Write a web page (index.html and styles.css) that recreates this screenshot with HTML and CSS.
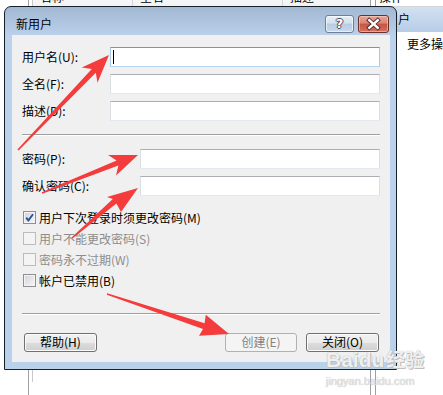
FILE: index.html
```html
<!DOCTYPE html>
<html lang="zh">
<head>
<meta charset="utf-8">
<title>新用户</title>
<link rel="stylesheet" href="styles.css">
</head>
<body>
<div class="app">
  <div class="list">
    <div class="list-inner">
      <div class="thead">
        <div class="th th-name">名称</div>
        <div class="th th-full">全名</div>
        <div class="th th-desc">描述</div>
      </div>
    </div>
  </div>
  <div class="pane">
    <div class="pane-top">操作</div>
    <div class="pane-head">用户</div>
    <div class="pane-item">更多操作</div>
  </div>
</div>

<div class="dialog">
  <div class="titlebar">
    <span class="title">新用户</span>
    <div class="tb-buttons">
      <div class="tb-btn tb-help"><span class="qmark">?</span></div>
      <div class="tb-btn tb-close">
        <svg width="31" height="18" viewBox="0 0 31 18"><path d="M11 5 L20 13 M20 5 L11 13" stroke="#4a2a26" stroke-width="4.6" stroke-linecap="square" fill="none"/><path d="M11 5 L20 13 M20 5 L11 13" stroke="#fff" stroke-width="2.6" stroke-linecap="square" fill="none"/></svg>
      </div>
    </div>
  </div>
  <div class="client">
    <div class="group">
      <div class="row"><span class="lbl lbl-a">用户名(U):</span><div class="input focus"><span class="caret"></span></div></div>
      <div class="row"><span class="lbl lbl-a">全名(F):</span><div class="input"></div></div>
      <div class="row"><span class="lbl lbl-a">描述(D):</span><div class="input"></div></div>
    </div>
    <div class="sep"></div>
    <div class="group g2">
      <div class="row"><span class="lbl lbl-b">密码(P):</span><div class="input"></div></div>
      <div class="row"><span class="lbl lbl-b">确认密码(C):</span><div class="input"></div></div>
    </div>
    <div class="checks">
      <div class="check"><span class="box checked"><svg width="11" height="11" viewBox="0 0 11 11"><path d="M2.2 5.6 L4.4 8.4 L9 2.2" stroke="#2b4fa0" stroke-width="1.8" fill="none"/></svg></span><span>用户下次登录时须更改密码(M)</span></div>
      <div class="check disabled"><span class="box"></span><span>用户不能更改密码(S)</span></div>
      <div class="check disabled"><span class="box"></span><span>密码永不过期(W)</span></div>
      <div class="check"><span class="box"></span><span>帐户已禁用(B)</span></div>
    </div>
    <div class="sep sep2"></div>
    <div class="btns">
      <div class="btn">帮助(H)</div>
      <div class="btn disabled btn-create">创建(E)</div>
      <div class="btn btn-close">关闭(O)</div>
    </div>
  </div>
</div>

<svg class="arrows" width="443" height="395" viewBox="0 0 443 395">
  <polygon points="109,55 97.5,82.8 95.8,72.8 18.6,150.6 17.4,149.4 91.8,69 81.7,67.6" />
  <polygon points="138,155 116,175.5 118.4,165.6 42.3,193.7 41.7,192.3 116.6,160.6 108,155.1" />
  <polygon points="138,188 121,212 116.4,203.5 72.5,238.6 71.5,237.4 112.8,199 107,197" />
  <polygon points="229,334 199,335.8 203,329 106.8,294.8 107.2,293.2 204.6,323.3 205.8,314.8" />
</svg>

<div class="wm">
  <div class="wm-logo"><span>Bai</span><span class="wm-du">du</span><span class="wm-cn">经验</span></div>
  <div class="wm-url">jingyan.baidu.com</div>
</div>
</body>
</html>
```

FILE: styles.css
```css
* { box-sizing: border-box; }

body {
  margin: 0;
  width: 443px;
  height: 395px;
  overflow: hidden;
  position: relative;
  background: #fff;
  font-family: "Noto Sans CJK SC", "Noto Sans", sans-serif;
  font-size: 12px;
  color: #000;
}

/* ---------- background MMC window ---------- */
.app {
  display: flex;
  height: 395px;
}

.list {
  margin-left: 28px;
  width: 343px;
  height: 100%;
  border-left: 1px solid #a0a0a0;
  border-right: 1px solid #a0a0a0;
  padding-left: 3px;
}

.list-inner {
  height: 100%;
  border-left: 1px solid #c8c8c8;
}

.thead {
  display: flex;
  height: 20px;
  margin-top: -13px;
  border-bottom: 1px solid #d5d5d5;
  background: linear-gradient(#ffffff, #f1f2f4);
}

.th {
  line-height: 19px;
  padding-left: 7px;
  border-right: 1px solid #d5d5d5;
}
.th-name { width: 100px; }
.th-full { width: 150px; }
.th-desc { flex: 1; border-right: none; }

.pane {
  flex: 1;
  min-width: 0;
  margin-left: 4px;
  border-left: 1px solid #a0a0a0;
  overflow: hidden;
}

.pane-top {
  height: 20px;
  margin-top: -13px;
  line-height: 19px;
  padding-left: 3px;
  border-bottom: 1px solid #d5d5d5;
  white-space: nowrap;
}

.pane-head {
  height: 25px;
  line-height: 24px;
  padding-left: 10px;
  background: linear-gradient(#d3e1f1, #b6cce7);
  white-space: nowrap;
}

.pane-item {
  padding-left: 31px;
  margin-top: 2px;
  line-height: 20px;
  white-space: nowrap;
}

/* ---------- dialog ---------- */
.dialog {
  position: absolute;
  left: 4px;
  top: 6px;
  width: 393px;
  height: 364px;
  border: 1px solid #152028;
  border-radius: 7px 7px 0 0;
  background: linear-gradient(180deg, #a2b8d3 0px, #b3c8e3 20px, #bcd2ec 29px, #bad1eb 100%);
  padding: 0 6px 7px 7px;
  display: flex;
  flex-direction: column;
}

.titlebar {
  height: 28px;
  flex-shrink: 0;
  display: flex;
  justify-content: space-between;
}

.title {
  margin-left: 4px;
  margin-top: 9px;
  line-height: 16px;
  font-size: 12px;
}

.tb-buttons {
  display: flex;
  gap: 4px;
  margin-top: 8px;
  margin-right: 1px;
}

.tb-btn {
  height: 18px;
  border-radius: 3px;
  display: flex;
  align-items: center;
  justify-content: center;
}

.tb-help {
  width: 29px;
  border: 1px solid #707f93;
  background: linear-gradient(#e6eef8 0%, #d3e0ef 45%, #b8cbe3 50%, #c9d9ec 100%);
  box-shadow: inset 0 0 0 1px rgba(255,255,255,0.6);
}

.qmark {
  font-family: "DejaVu Sans", sans-serif;
  font-weight: bold;
  font-size: 13px;
  line-height: 16px;
  color: #fff;
  text-shadow: 1px 0 0 #3c4c60, -1px 0 0 #3c4c60, 0 1px 0 #3c4c60, 0 -1px 0 #3c4c60;
}

.tb-close {
  width: 31px;
  border: 1px solid #6e2f27;
  background: linear-gradient(#e8a595 0%, #d98473 45%, #c75543 50%, #d4715d 100%);
  box-shadow: inset 0 0 0 1px rgba(255,220,210,0.5);
}

.client {
  flex: 1;
  background: #f0f0f0;
  padding: 12px 10px 0 10px;
  display: flex;
  flex-direction: column;
}

.row {
  display: flex;
  align-items: center;
  height: 20px;
}
.row + .row { margin-top: 7px; }

.lbl {
  line-height: 16px;
  flex-shrink: 0;
}
.lbl-a { width: 88px; }
.lbl-b { width: 118px; }

.input {
  flex: 1;
  height: 20px;
  background: #fff;
  border: 1px solid;
  border-color: #abadb3 #dbdfe6 #e3e9ef #dbdfe6;
  display: flex;
  align-items: center;
  padding-left: 2px;
}

.input.focus {
  border-color: #6c98c4 #a9c8e4 #b6d5ee #a9c8e4;
}

.caret {
  width: 1px;
  height: 14px;
  background: #000;
}

.sep {
  height: 2px;
  border-top: 1px solid #a0a0a0;
  border-bottom: 1px solid #ffffff;
  margin-top: 13px;
}

.g2 { margin-top: 13px; }

.checks {
  margin-top: 11px;
  display: flex;
  flex-direction: column;
}

.check {
  display: flex;
  align-items: center;
  height: 21px;
  padding-left: 1px;
  line-height: 16px;
}

.box {
  width: 13px;
  height: 13px;
  border: 1px solid #8e8f8f;
  background: linear-gradient(135deg, #d0d3d8, #f7f7f7);
  box-shadow: inset 0 0 0 1px #f4f4f4;
  margin-right: 3px;
  display: flex;
  flex-shrink: 0;
}

.check.disabled { color: #8d8d8d; }
.check.disabled .box {
  border-color: #bcbcbc;
  background: #f4f4f4;
}

.sep2 { margin-top: 22px; }

.btns {
  margin-top: 18px;
  display: flex;
  padding-left: 2px;
  padding-right: 1px;
}

.btn {
  width: 73px;
  height: 19px;
  border: 1px solid #707070;
  border-radius: 3px;
  background: linear-gradient(#f2f2f2 0%, #ebebeb 50%, #dddddd 51%, #cfcfcf 100%);
  box-shadow: inset 0 0 0 1px #fbfbfb;
  text-align: center;
  line-height: 16px;
}

.btn.disabled {
  border-color: #adb2b5;
  background: #f4f4f4;
  box-shadow: none;
  color: #838383;
}

.btn-create { margin-left: auto; width: 72px; }
.btn-close { margin-left: 9px; }

/* ---------- annotation overlay ---------- */
.arrows {
  position: absolute;
  left: 0;
  top: 0;
  pointer-events: none;
}
.arrows polygon { fill: #f43c3c; }

.wm {
  position: absolute;
  left: 326px;
  top: 346px;
  color: rgba(255,255,255,0.85);
  pointer-events: none;
}

.wm-logo {
  font-family: "Liberation Sans", sans-serif;
  font-weight: bold;
  font-size: 21px;
  line-height: 26px;
  text-shadow: 0 0 1px #9a9a9a, 1px 1px 0 #c4c4c4;
}

.wm-cn {
  font-family: "Noto Sans CJK SC", sans-serif;
  font-size: 19px;
  margin-left: 2px;
}

.wm-url {
  font-family: "Liberation Sans", sans-serif;
  font-size: 11px;
  line-height: 12px;
  margin-top: 2px;
  color: rgba(235,235,235,0.9);
  text-shadow: 0 0 1px #a8a8a8;
}
```
